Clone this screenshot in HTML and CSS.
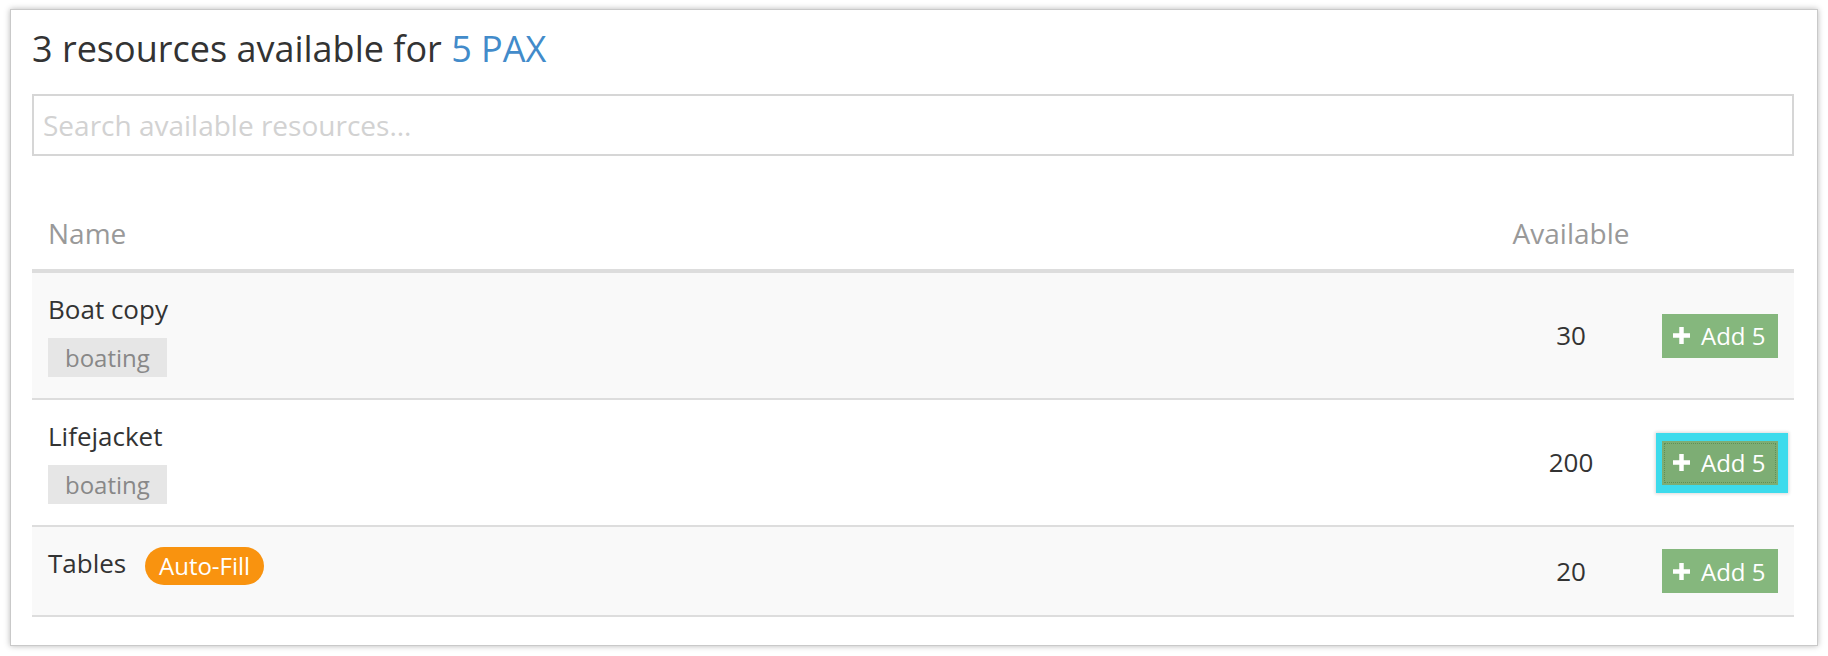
FILE: index.html
```html
<!DOCTYPE html>
<html>
<head>
<meta charset="utf-8">
<link rel="stylesheet" href="styles.css">
</head>
<body>
<div class="panel">
  <h2 class="title">3 resources available for <span class="pax">5 PAX</span></h2>
  <input class="search" type="text" placeholder="Search available resources...">
  <div class="table">
    <div class="row head">
      <div class="cell name-h">Name</div>
      <div class="cell avail">Available</div>
      <div class="cell"></div>
    </div>
    <div class="row odd">
      <div class="cell name">
        <div class="label">Boat copy</div>
        <span class="tag">boating</span>
      </div>
      <div class="cell avail value">30</div>
      <div class="cell action"><button class="add"><svg class="plus" viewBox="0 0 16 16"><path d="M8 0v16M0 8h16"/></svg>Add 5</button></div>
    </div>
    <div class="row">
      <div class="cell name">
        <div class="label">Lifejacket</div>
        <span class="tag">boating</span>
      </div>
      <div class="cell avail value">200</div>
      <div class="cell action"><button class="add focused"><svg class="plus" viewBox="0 0 16 16"><path d="M8 0v16M0 8h16"/></svg>Add 5</button></div>
    </div>
    <div class="row odd">
      <div class="cell name">
        <div class="label">Tables <span class="pill">Auto-Fill</span></div>
      </div>
      <div class="cell avail value">20</div>
      <div class="cell action"><button class="add"><svg class="plus" viewBox="0 0 16 16"><path d="M8 0v16M0 8h16"/></svg>Add 5</button></div>
    </div>
  </div>
</div>
</body>
</html>
```
FILE: styles.css
```css
* { box-sizing: border-box; }
body {
  margin: 0;
  background: #fff;
  font-family: "Open Sans", "Noto Sans", sans-serif;
  color: #333;
}
.panel {
  margin: 9px 10px;
  height: 637px;
  border: 1px solid #c9c9c9;
  box-shadow: 0 0 6px rgba(0, 0, 0, 0.28);
  background: #fff;
  padding: 14px 23px 0 21px;
}
.title {
  margin: 0;
  font-size: 36px;
  line-height: 49px;
  font-weight: 400;
  color: #333;
}
.pax { color: #428bca; }
.search {
  display: block;
  width: 100%;
  height: 62px;
  margin-top: 21px;
  border: 2px solid #d6d6d6;
  border-radius: 0;
  padding: 0 9px;
  font-family: "Open Sans", "Noto Sans", sans-serif;
  font-size: 28px;
  color: #555;
  outline: none;
}
.search::placeholder { color: #d2d2d2; }
.table { margin-top: 40px; }
.row {
  display: grid;
  grid-template-columns: 1fr 160px 143px;
  border-bottom: 2px solid #dddddd;
}
.row.odd { background: #f9f9f9; }
.row.head {
  border-bottom: 4px solid #dddddd;
  background: #fff;
}
.cell { padding: 18px 16px; }
.head .cell {
  padding: 18px 16px 17px;
  font-size: 28px;
  line-height: 38px;
  color: #999;
}
.avail { text-align: center; }
.name { display: flex; flex-direction: column; align-items: flex-start; }
.label {
  font-size: 26px;
  line-height: 37px;
  color: #333;
}
.tag {
  display: block;
  margin: 10px 0 3px;
  height: 39px;
  padding: 0 17px;
  background: #e6e6e6;
  color: #888;
  font-size: 24px;
  line-height: 39px;
}
.pill {
  display: inline-block;
  vertical-align: middle;
  margin-left: 12px;
  height: 38px;
  padding: 0 14px;
  border-radius: 19px;
  background: #f9930f;
  color: #fff;
  font-size: 24px;
  line-height: 38px;
}
.value {
  align-self: center;
  font-size: 26px;
  line-height: 37px;
  padding: 0 16px;
}
.action {
  display: flex;
  justify-content: flex-end;
  align-items: center;
  padding: 22px 16px 22px 0;
}
.add {
  display: flex;
  align-items: center;
  width: 116px;
  height: 44px;
  padding: 0 0 0 11px;
  border: none;
  border-radius: 0;
  background: #85b77d;
  color: #fff;
  font-family: "Open Sans", "Noto Sans", sans-serif;
  font-size: 24px;
}
.plus {
  flex: 0 0 auto;
  width: 17px;
  height: 17px;
  margin-right: 11px;
  stroke: #fff;
  stroke-width: 4.2;
  fill: none;
}
.add.focused {
  background: #7dad74;
  box-shadow: 2px 0 0 8px #3ddbec, 2px 0 3px 9px rgba(0, 0, 0, 0.15);
  outline: 1px dotted #5f8f57;
  outline-offset: -3px;
}
```
